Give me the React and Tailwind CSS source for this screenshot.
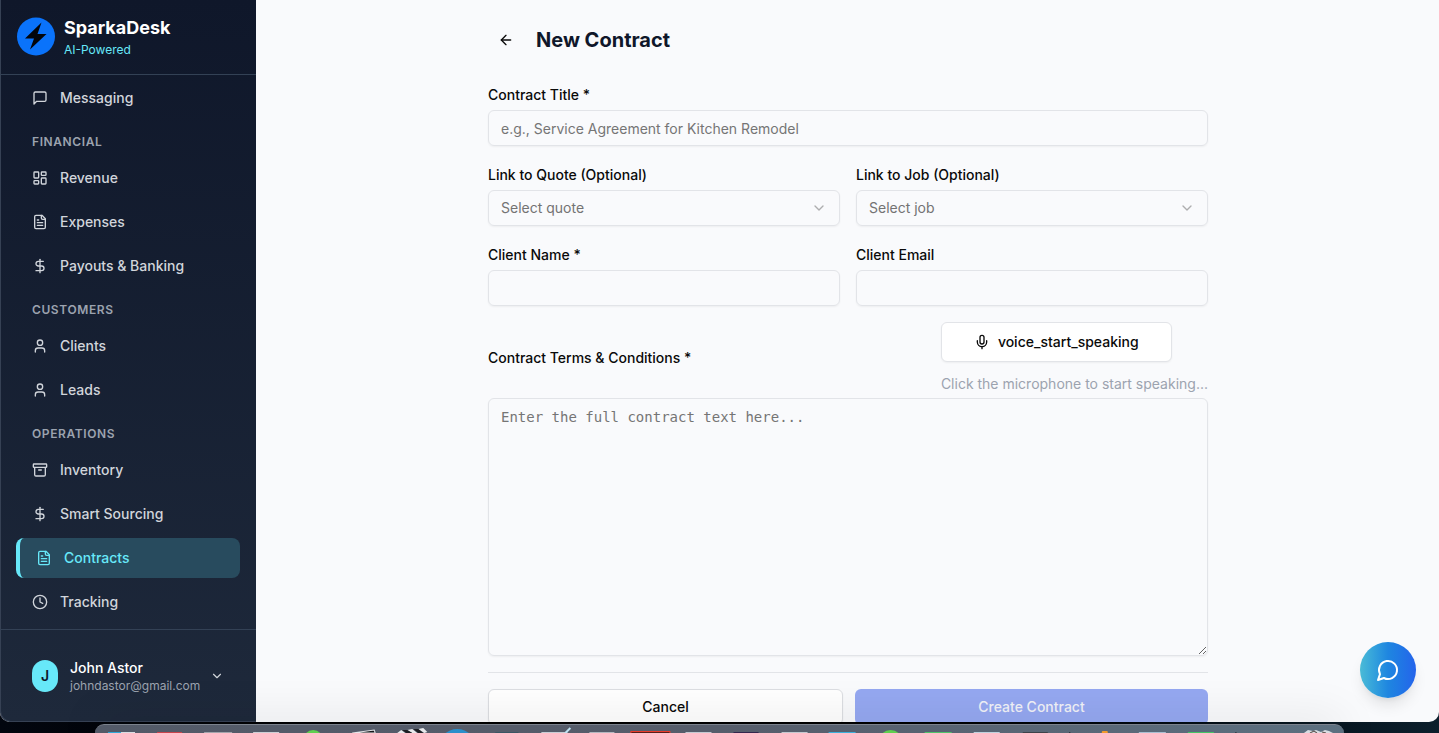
import React from "react";
import {
  Archive,
  ArrowLeft,
  ChevronDown,
  Clock,
  DollarSign,
  LayoutDashboard,
  Mic,
  User,
} from "lucide-react";

function LineIcon({ className, children }) {
  return (
    <svg
      viewBox="0 0 24 24"
      fill="none"
      stroke="currentColor"
      strokeWidth="2"
      strokeLinecap="round"
      strokeLinejoin="round"
      aria-hidden="true"
      className={className}
    >
      {children}
    </svg>
  );
}

function MessageSquareIcon({ className }) {
  return (
    <LineIcon className={className}>
      <path d="M21 15a2 2 0 0 1-2 2H7l-4 4V5a2 2 0 0 1 2-2h14a2 2 0 0 1 2 2z" />
    </LineIcon>
  );
}

function FileTextIcon({ className }) {
  return (
    <LineIcon className={className}>
      <path d="M15 2H6a2 2 0 0 0-2 2v16a2 2 0 0 0 2 2h12a2 2 0 0 0 2-2V7Z" />
      <path d="M14 2v4a2 2 0 0 0 2 2h4" />
      <path d="M10 9H8" />
      <path d="M16 13H8" />
      <path d="M16 17H8" />
    </LineIcon>
  );
}

function ChatBubbleIcon({ className }) {
  return (
    <LineIcon className={className}>
      <path d="M7.9 20A9 9 0 1 0 4 16.1L2 22Z" />
    </LineIcon>
  );
}

const sections = [
  { items: [{ name: "Messaging", icon: MessageSquareIcon }] },
  {
    title: "FINANCIAL",
    items: [
      { name: "Revenue", icon: LayoutDashboard },
      { name: "Expenses", icon: FileTextIcon },
      { name: "Payouts & Banking", icon: DollarSign },
    ],
  },
  {
    title: "CUSTOMERS",
    items: [
      { name: "Clients", icon: User },
      { name: "Leads", icon: User },
    ],
  },
  {
    title: "OPERATIONS",
    items: [
      { name: "Inventory", icon: Archive },
      { name: "Smart Sourcing", icon: DollarSign },
      { name: "Contracts", icon: FileTextIcon, active: true },
      { name: "Tracking", icon: Clock },
    ],
  },
];

function NavItem({ name, icon: Icon, active }) {
  return (
    <li>
      <a
        href="#"
        aria-current={active ? "page" : undefined}
        className={
          active
            ? "flex h-10 items-center gap-3 rounded-lg border-l-4 border-[#67e8f9] bg-[#284b5e] px-4 text-sm font-medium text-[#67e8f9]"
            : "flex h-10 items-center gap-3 rounded-lg px-4 text-sm font-medium text-[#d1d5db]"
        }
      >
        <Icon className="size-4 shrink-0" />
        <span>{name}</span>
      </a>
    </li>
  );
}

function Sidebar() {
  return (
    <aside className="flex w-64 shrink-0 flex-col rounded-bl-[10px] bg-linear-to-b from-[#0f172a] to-[#1e293b] shadow-[inset_1px_-1px_0_#364154]">
      <div className="flex shrink-0 items-start gap-2 border-b border-[#334155] px-4 pt-4 pb-[14px]">
        <svg viewBox="0 0 40 40" aria-hidden="true" className="size-10 shrink-0">
          <circle cx="20" cy="20.5" r="19" fill="#0a73fb" />
          <path d="M25.500 6.500 9 22.500h9L14 33.500 30.500 18H21.500Z" fill="#03060c" />
        </svg>
        <div>
          <p className="text-lg leading-6 font-bold text-white">SparkaDesk</p>
          <p className="text-xs leading-5 text-[#67e8f9]">AI-Powered</p>
        </div>
      </div>

      <nav className="min-h-0 flex-1 overflow-hidden px-4 pt-[3px]" aria-label="Main">
        <div className="flex flex-col gap-2">
          {sections.map((section) => (
            <div key={section.title || "top"}>
              {section.title && (
                <h2 className="flex h-8 items-center px-4 text-xs font-semibold tracking-wider text-[#9ca3af]">
                  {section.title}
                </h2>
              )}
              <ul className="flex flex-col gap-1">
                {section.items.map((item) => (
                  <NavItem key={item.name} {...item} />
                ))}
              </ul>
            </div>
          ))}
        </div>
      </nav>

      <div className="shrink-0 border-t border-[#334155] p-4">
        <button type="button" className="flex w-full items-center px-4 py-3 text-left">
          <span className="flex h-8 w-[26px] shrink-0 items-center justify-center rounded-full bg-[#67e8f9] text-sm font-semibold text-[#0f172a]">
            J
          </span>
          <span className="ml-3 flex min-w-0 flex-1 flex-col">
            <span className="text-sm leading-5 font-medium text-white">John Astor</span>
            <span className="text-xs leading-4 text-[#9ca3af]">johndastor@gmail.com</span>
          </span>
          <ChevronDown className="size-3.5 shrink-0 text-[#d1d5db]" />
        </button>
      </div>
    </aside>
  );
}

const labelClass = "block text-sm leading-[26px] font-medium text-[#0a0a0a]";
const fieldClass =
  "h-9 w-full rounded-md border border-[#e2e4e8] bg-transparent px-3 text-sm text-[#0a0a0a] shadow-xs placeholder:text-[#757575]";

function TextField({ id, label, type = "text", placeholder }) {
  return (
    <div className="flex flex-col gap-[2px]">
      <label htmlFor={id} className={labelClass}>
        {label}
      </label>
      <input id={id} type={type} placeholder={placeholder} className={fieldClass} />
    </div>
  );
}

function SelectField({ id, label, placeholder }) {
  return (
    <div className="flex flex-col gap-[2px]">
      <label htmlFor={id} className={labelClass}>
        {label}
      </label>
      <div className="relative">
        <select
          id={id}
          defaultValue=""
          className="h-9 w-full appearance-none rounded-md border border-[#e2e4e8] bg-transparent px-3 text-sm text-[#737373] shadow-xs"
        >
          <option value="">{placeholder}</option>
        </select>
        <ChevronDown className="pointer-events-none absolute top-1/2 right-[13px] size-4 -translate-y-1/2 text-black opacity-30" />
      </div>
    </div>
  );
}

function ContractForm() {
  return (
    <form className="flex flex-col gap-4">
      <TextField
        id="title"
        label="Contract Title *"
        placeholder="e.g., Service Agreement for Kitchen Remodel"
      />
      <div className="grid grid-cols-2 gap-4">
        <SelectField id="quote" label="Link to Quote (Optional)" placeholder="Select quote" />
        <SelectField id="job" label="Link to Job (Optional)" placeholder="Select job" />
        <TextField id="client-name" label="Client Name *" />
        <TextField id="client-email" label="Client Email" type="email" />
      </div>
      <div className="flex flex-col gap-1">
        <div className="flex items-center justify-between">
          <label htmlFor="terms" className={labelClass}>
            Contract Terms &amp; Conditions *
          </label>
          <div className="flex flex-col items-start gap-3">
            <button
              type="button"
              className="flex h-10 items-center gap-2 rounded-md border border-[#e2e4e8] bg-white px-8 text-sm font-medium text-[#0a0a0a] shadow-xs"
            >
              <Mic className="size-4" />
              voice_start_speaking
            </button>
            <p className="text-sm leading-5 text-[#9ca3af]">
              Click the microphone to start speaking...
            </p>
          </div>
        </div>
        <textarea
          id="terms"
          rows={12}
          placeholder="Enter the full contract text here..."
          className="block w-full rounded-md border border-[#e2e4e8] bg-transparent px-3 py-2 font-['DejaVu_Sans_Mono',monospace] text-sm leading-5 text-[#0a0a0a] shadow-xs placeholder:text-[#757575]"
        />
      </div>
      <div className="flex gap-3 border-t border-[#e2e4e8] pt-4">
        <button
          type="button"
          className="h-9 flex-1 rounded-md border border-[#dcdee2] bg-white px-4 text-sm font-medium text-[#0a0a0a] shadow-xs"
        >
          Cancel
        </button>
        <button
          type="submit"
          className="h-9 flex-1 rounded-md bg-[#95a8f1] px-4 text-sm font-medium text-[#f1f2f8]"
        >
          Create Contract
        </button>
      </div>
    </form>
  );
}

const dockTiles = [
  [13, 13, "#2fa8d8"],
  [26, 14, "#d9dde2"],
  [62, 25, "#c9444c"],
  [109, 28, "#a3a5ac"],
  [158, 26, "#cdd0d6"],
  [400, 23, "#3a5664"],
  [446, 26, "#c9ced6"],
  [494, 25, "#b4b8c0"],
  [590, 26, "#c5cad2"],
  [638, 25, "#33264d"],
  [686, 26, "#c4c9d0"],
  [733, 27, "#3bb0dc"],
  [829, 27, "#4fc46b"],
  [878, 26, "#bfd2de"],
  [927, 25, "#3d4249"],
  [1043, 27, "#a9bfd2"],
  [1092, 26, "#45c566"],
];

function Dock() {
  return (
    <div className="relative z-10 shrink-0 px-[95px] pt-[2px]">
      <div className="h-[9px] overflow-hidden rounded-t-2xl border-t border-[#7b828d] bg-linear-to-r from-[#535a68] via-[#565d6b] to-[#5c7080] shadow-[0_0_44px_rgba(0,0,0,0.24)]">
        <svg
          viewBox="0 0 1248 8"
          preserveAspectRatio="none"
          aria-hidden="true"
          className="block h-2 w-full"
        >
          {dockTiles.map(([x, w, fill]) => (
            <rect key={x} x={x} y="7" width={w} height="4" fill={fill} />
          ))}
          <circle cx="218" cy="15" r="10" fill="#5fd04f" />
          <path d="M257 8 279 5l1 3Z" fill="#17181b" stroke="#e5e7ea" />
          <path d="m302 8 4-3 4 3Zm10-3 5-1 5 4h-5Zm11-1 5-1 4 4-3 1Z" fill="#e8eaec" />
          <path d="m307 5 5 0 5 3h-6Zm11-1 5 0 5 4h-5Z" fill="#1d1f23" />
          <circle cx="362" cy="23" r="19" fill="#2a8fcb" />
          <path d="m470 8 5-5" stroke="#bfe3f2" strokeWidth="2" />
          <path d="M535.500 9V6.500h39V9" fill="#5a1f1c" stroke="#ea3a2a" />
          <circle cx="795" cy="17" r="12" fill="#5fd04f" />
          <path d="M974 7v2M1140 7v2" stroke="#20262d" />
          <rect x="1006" y="6" width="6" height="4" rx="1" fill="#f29a2b" />
          <path d="m1208 8 4-3 5 1 3-1 5 2 4-2 4 1 4 2Z" fill="#d9dde2" />
          <path d="m1214 8 4-2 3 2m5-1 4 1" fill="none" stroke="#5d524d" />
        </svg>
      </div>
    </div>
  );
}

export default function App() {
  return (
    <div className="flex h-screen flex-col overflow-hidden bg-linear-to-r from-[#02060f] via-black to-[#0c1f2c] font-['Inter',sans-serif]">
      <div className="relative flex min-h-0 flex-1 overflow-hidden rounded-b-[10px] bg-[#f9fafc]">
        <Sidebar />
        <main className="min-w-0 flex-1 overflow-hidden pl-px">
          <div className="mx-auto max-w-3xl px-6 pt-[22px]">
            <header className="mb-[22px] flex items-center gap-3">
              <button
                type="button"
                aria-label="Back"
                className="flex size-9 items-center justify-center rounded-md text-[#0a0a0a]"
              >
                <ArrowLeft className="size-4" />
              </button>
              <h1 className="text-xl leading-7 font-bold text-[#0f172a]">New Contract</h1>
            </header>
            <div className="pt-[2px]">
              <ContractForm />
            </div>
          </div>
        </main>
        <button
          type="button"
          aria-label="Open chat"
          className="absolute right-[23px] bottom-6 flex size-14 items-center justify-center rounded-full bg-linear-to-r from-[#4abbd6] via-[#1f86e0] to-[#2563eb] text-white shadow-lg"
        >
          <ChatBubbleIcon className="size-6" />
        </button>
      </div>
      <Dock />
    </div>
  );
}
